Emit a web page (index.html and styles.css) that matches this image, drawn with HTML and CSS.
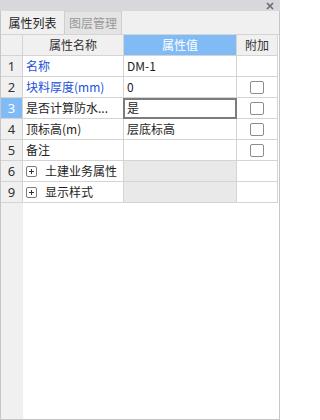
FILE: index.html
```html
<!DOCTYPE html>
<html lang="zh">
<head>
<meta charset="utf-8">
<link rel="stylesheet" href="styles.css">
</head>
<body>
<div class="panel">
  <div class="titlebar">
    <svg class="close" width="8" height="8" viewBox="0 0 8 8"><path d="M1 1L7 7M7 1L1 7" stroke="#6a6a6a" stroke-width="1.6"/></svg>
  </div>
  <div class="tabs">
    <div class="tab active">属性列表</div>
    <div class="tab">图层管理</div>
  </div>
  <div class="grid">
    <div class="c num hd"></div>
    <div class="c hd center">属性名称</div>
    <div class="c hd center hl">属性值</div>
    <div class="c hd center">附加</div>

    <div class="c num">1</div>
    <div class="c blue">名称</div>
    <div class="c">DM-1</div>
    <div class="c"></div>

    <div class="c num">2</div>
    <div class="c blue">块料厚度(mm)</div>
    <div class="c">0</div>
    <div class="c center"><span class="chk"></span></div>

    <div class="c num sel">3</div>
    <div class="c">是否计算防水...</div>
    <div class="c focus">是</div>
    <div class="c center"><span class="chk"></span></div>

    <div class="c num">4</div>
    <div class="c">顶标高(m)</div>
    <div class="c">层底标高</div>
    <div class="c center"><span class="chk"></span></div>

    <div class="c num">5</div>
    <div class="c">备注</div>
    <div class="c"></div>
    <div class="c center"><span class="chk"></span></div>

    <div class="c num">6</div>
    <div class="c grp"><span class="plus"><svg width="11" height="11" viewBox="0 0 11 11"><rect x="0.5" y="0.5" width="10" height="10" rx="1.5" fill="#fff" stroke="#7a7a7a"/><path d="M3 5.5H8M5.5 3V8" stroke="#333" stroke-width="1"/></svg></span>土建业务属性</div>
    <div class="c gray"></div>
    <div class="c"></div>

    <div class="c num">9</div>
    <div class="c grp"><span class="plus"><svg width="11" height="11" viewBox="0 0 11 11"><rect x="0.5" y="0.5" width="10" height="10" rx="1.5" fill="#fff" stroke="#7a7a7a"/><path d="M3 5.5H8M5.5 3V8" stroke="#333" stroke-width="1"/></svg></span>显示样式</div>
    <div class="c gray"></div>
    <div class="c"></div>
  </div>
  <div class="filler"><div class="filler-num"></div></div>
</div>
</body>
</html>
```
FILE: styles.css
```css
html, body {
  margin: 0;
  padding: 0;
  background: #fff;
}
.panel {
  width: 280px;
  height: 420px;
  box-sizing: border-box;
  border: 1px solid #c6c6c6;
  border-top: none;
  display: flex;
  flex-direction: column;
  font-family: "Noto Sans CJK SC", "Noto Sans", sans-serif;
  font-size: 12px;
  color: #1e1e1e;
  background: #fff;
}
.titlebar {
  height: 11px;
  margin: 0 -1px;
  background: #d7d7dc;
  display: flex;
  justify-content: flex-end;
  align-items: center;
  padding-right: 6px;
}
.close {
  display: block;
}
.tabs {
  height: 23px;
  background: #f0f0f0;
  display: flex;
  align-items: stretch;
}
.tab {
  width: 56px;
  display: flex;
  align-items: center;
  justify-content: center;
  color: #999;
  background: #e4e4e4;
  border-right: 1px solid #cfcfcf;
  border-top: 1px solid #d6d6d6;
  font-size: 12px;
  line-height: 1;
}
.tab.active {
  width: 63px;
  background: #f0f0f0;
  color: #1e1e1e;
  border-top: none;
}
.grid {
  display: grid;
  grid-template-columns: 22px 101px 113px 41px;
  grid-auto-rows: 21px;
  border-top: 1px solid #d4d4d4;
}
.c {
  box-sizing: border-box;
  border-right: 1px solid #d4d4d4;
  border-bottom: 1px solid #d4d4d4;
  display: flex;
  align-items: center;
  padding-left: 3px;
  white-space: nowrap;
  overflow: hidden;
  line-height: 1;
  position: relative;
}
.hd {
  background: #f0f0f0;
  color: #333;
}
.center {
  justify-content: center;
  padding-left: 0;
}
.hl {
  background: #80bbf6;
  color: #fff;
}
.num {
  background: #f0f0f0;
  justify-content: center;
  padding-left: 0;
  color: #333;
  font-size: 13px;
  font-family: "Noto Sans", "Noto Sans CJK SC", sans-serif;
}
.num.sel {
  background: #80bbf6;
  color: #fff;
}
.blue {
  color: #2150dc;
}
.gray {
  background: #e9e9e9;
}
.focus {
  overflow: visible;
}
.focus::after {
  content: "";
  position: absolute;
  left: -1px;
  top: 0;
  right: -1px;
  bottom: -1px;
  border: 2px solid #7c7c7c;
}
.chk {
  width: 12px;
  height: 11px;
  border: 1px solid #8c8c8c;
  border-radius: 2px;
  background: #fff;
  margin-left: -1px;
}
.grp {
  padding-left: 3px;
}
.plus {
  display: flex;
  margin-right: 8px;
}
.filler {
  flex: 1;
  display: flex;
}
.filler-num {
  width: 22px;
  background: #f0f0f0;
}
```
